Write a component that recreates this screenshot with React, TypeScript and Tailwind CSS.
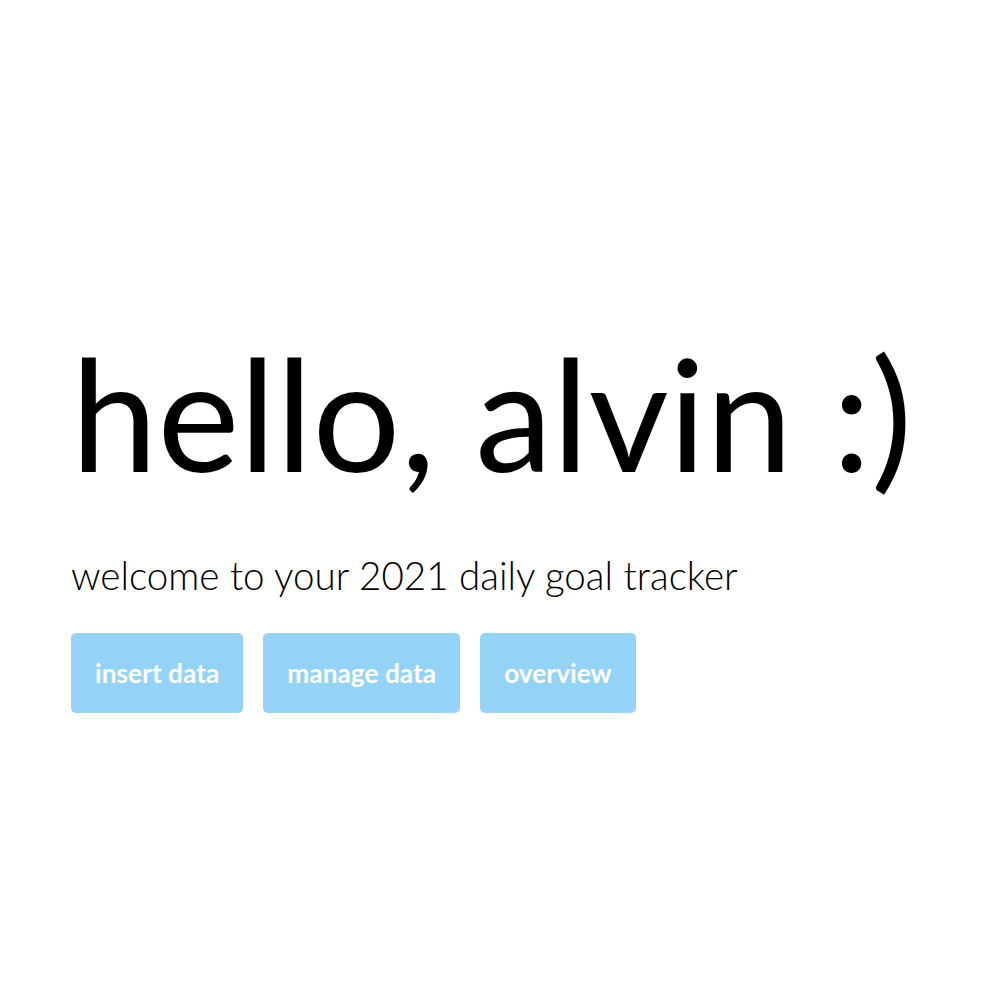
import React from "react";

const buttons = ["insert data", "manage data", "overview"];

export default function App() {
  return (
    <div
      className="min-h-screen bg-white text-black flex flex-col justify-center px-[71px]"
      style={{ fontFamily: "Lato, 'Noto Sans', sans-serif" }}
    >
      <div className="flex flex-col pt-[48px]">
        <h1 className="text-[155px] font-normal leading-none whitespace-nowrap">
          hello, alvin :)
        </h1>
        <p className="mt-[66px] text-[38.6px] font-light leading-none">
          welcome to your 2021 daily goal tracker
        </p>
        <div className="mt-[39px] flex gap-5">
          {buttons.map((b) => (
            <button
              key={b}
              className="h-[80px] px-6 rounded-[5px] bg-[#94d3f5] text-white text-[26.3px] font-bold"
            >
              {b}
            </button>
          ))}
        </div>
      </div>
    </div>
  );
}
